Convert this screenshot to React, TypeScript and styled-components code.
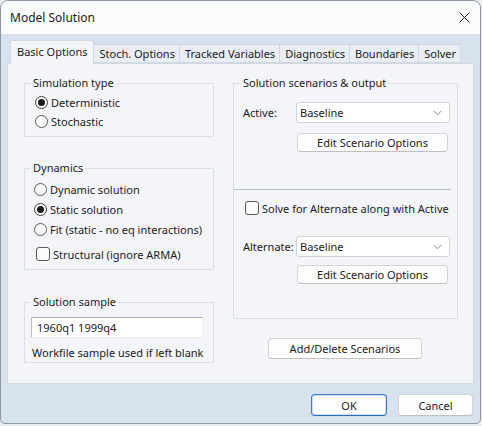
import React from 'react';
import styled, { createGlobalStyle } from 'styled-components';

const FONT = `"Noto Sans", "Segoe UI", sans-serif`;

const Global = createGlobalStyle`
  html, body { margin: 0; padding: 0; background: #e9ecf1; }
  body { font-family: ${FONT}; font-size: 11px; color: #1b1b1b; }
  * { box-sizing: border-box; }
`;

const Window = styled.div`
  width: 481px;
  height: 424px;
  border: 1px solid #8d97a5;
  border-radius: 8px 8px 5px 5px;
  background: #d8e1ee;
  display: flex;
  flex-direction: column;
  overflow: hidden;
`;

const TitleBar = styled.div`
  height: 33px;
  flex: none;
  background: #fafbfd;
  display: flex;
  align-items: center;
  justify-content: space-between;
  padding: 0 10px 0 9px;
  font-size: 12px;
`;

const CloseBtn = styled.div`
  width: 12px;
  height: 12px;
  display: flex;
  align-items: center;
  justify-content: center;
`;

const TabRow = styled.div`
  display: flex;
  align-items: flex-end;
  height: 23px;
  margin-top: 6px;
  padding-left: 9px;
  position: relative;
  z-index: 1;
`;

const Tab = styled.div<{ $active?: boolean }>`
  height: ${(p) => (p.$active ? 24 : 19)}px;
  margin-bottom: ${(p) => (p.$active ? -1 : 0)}px;
  padding: ${(p) => (p.$active ? '0 6px 2px 6px' : '0 4px 0 5px')};
  display: flex;
  align-items: center;
  background: ${(p) => (p.$active ? '#f3f5f9' : '#e9eef5')};
  border: 1px solid #d2d8e1;
  border-bottom: ${(p) => (p.$active ? 'none' : '1px solid #d2d8e1')};
  border-left: ${(p) => (p.$active ? '1px solid #d2d8e1' : 'none')};
  white-space: nowrap;
`;

const Panel = styled.div`
  margin: 0 6px;
  height: 321px;
  border: 1px solid #d2d8e1;
  background: #f3f5f9;
  padding: 11px 14px 0 16px;
  display: flex;
  gap: 19px;
`;

const Column = styled.div<{ $w: number }>`
  width: ${(p) => p.$w}px;
  display: flex;
  flex-direction: column;
`;

const Group = styled.fieldset<{ $mt?: number; $pl?: number; $h?: number }>`
  margin: ${(p) => p.$mt ?? 0}px 0 0 0;
  padding: 0 7px 0 ${(p) => p.$pl ?? 11}px;
  border: 1px solid #dcdfe5;
  min-width: 0;
  ${(p) => (p.$h ? `height: ${p.$h}px;` : '')}
  display: flex;
  flex-direction: column;
`;

const Legend = styled.legend<{ $ml?: number }>`
  padding: 0 2px;
  margin-left: ${(p) => p.$ml ?? -5}px;
  line-height: 16px;
  font-size: 11px;
`;

const OptionRow = styled.div<{ $h?: number; $mt?: number; $ml?: number }>`
  height: ${(p) => p.$h ?? 20}px;
  margin-top: ${(p) => p.$mt ?? 0}px;
  margin-left: ${(p) => p.$ml ?? 0}px;
  display: flex;
  align-items: center;
  gap: 3px;
  white-space: nowrap;
`;

const Radio = styled.span<{ $on?: boolean }>`
  width: 13px;
  height: 13px;
  flex: none;
  border-radius: 50%;
  border: 1px solid ${(p) => (p.$on ? '#3b3b3b' : '#5a5a5a')};
  background: #fbfbfb;
  display: flex;
  align-items: center;
  justify-content: center;
  &::after {
    content: '';
    width: 7px;
    height: 7px;
    border-radius: 50%;
    background: ${(p) => (p.$on ? '#1c1c1c' : 'transparent')};
  }
`;

const Check = styled.span`
  width: 14px;
  height: 14px;
  flex: none;
  border-radius: 3px;
  border: 1px solid #5a5a5a;
  background: #fbfbfb;
`;

const Spacer = styled.div<{ $h: number }>`
  height: ${(p) => p.$h}px;
  flex: none;
`;

const TextField = styled.div`
  margin-top: 7px;
  width: 172px;
  height: 21px;
  background: #fff;
  border: 1px solid #ececec;
  border-top: 1px solid #a9a9a9;
  border-left: 1px solid #bdbdbd;
  padding-left: 5px;
  display: flex;
  align-items: center;
`;

const Hint = styled.div`
  margin-top: 7px;
  margin-left: 1px;
  line-height: 16px;
  white-space: nowrap;
`;

const FieldRow = styled.div<{ $mt: number }>`
  margin-top: ${(p) => p.$mt}px;
  display: flex;
  align-items: center;
`;

const FieldLabel = styled.div`
  width: 53px;
  flex: none;
  white-space: nowrap;
`;

const Select = styled.div`
  flex: 1;
  height: 21px;
  background: #fff;
  border: 1px solid #d3d3d3;
  border-radius: 3px;
  display: flex;
  align-items: center;
  justify-content: space-between;
  padding: 0 7px 0 3px;
`;

const Button = styled.div<{ $w: number; $mt?: number; $ml?: number; $h?: number; $primary?: boolean }>`
  width: ${(p) => p.$w}px;
  height: ${(p) => p.$h ?? 19}px;
  margin-top: ${(p) => p.$mt ?? 0}px;
  margin-left: ${(p) => p.$ml ?? 0}px;
  flex: none;
  background: #fdfdfd;
  border: 1px solid ${(p) => (p.$primary ? '#3a7bd0' : '#d4d4d4')};
  border-bottom-color: ${(p) => (p.$primary ? '#2c6bc0' : '#bfbfbf')};
  box-shadow: ${(p) => (p.$primary ? 'inset 0 0 0 1px rgba(58,123,208,0.25)' : 'none')};
  border-radius: 4px;
  display: flex;
  align-items: center;
  justify-content: center;
  white-space: nowrap;
`;

const Separator = styled.div`
  margin: 37px -1px 0 -9px;
  height: 1px;
  background: #b9bfc8;
`;

const Footer = styled.div`
  display: flex;
  justify-content: flex-end;
  gap: 11px;
  padding: 10px 7px 0 0;
`;

const Chevron = () => (
  <svg width="9" height="6" viewBox="0 0 9 6">
    <path d="M0.5 0.8 L4.5 4.8 L8.5 0.8" fill="none" stroke="#8a8a8a" strokeWidth="1" />
  </svg>
);

const CloseIcon = () => (
  <svg width="11" height="11" viewBox="0 0 11 11">
    <path d="M0.5 0.5 L10.5 10.5 M10.5 0.5 L0.5 10.5" stroke="#222" strokeWidth="1" />
  </svg>
);

export default function App() {
  return (
    <>
      <Global />
      <Window>
        <TitleBar>
          <span>Model Solution</span>
          <CloseBtn>
            <CloseIcon />
          </CloseBtn>
        </TitleBar>
        <TabRow>
          <Tab $active>Basic Options</Tab>
          <Tab>Stoch. Options</Tab>
          <Tab>Tracked Variables</Tab>
          <Tab>Diagnostics</Tab>
          <Tab>Boundaries</Tab>
          <Tab>Solver</Tab>
        </TabRow>
        <Panel>
          <Column $w={190}>
            <Group>
              <Legend>Simulation type</Legend>
              <Spacer $h={2} />
              <OptionRow $ml={-1} $h={19}>
                <Radio $on />
                Deterministic
              </OptionRow>
              <OptionRow $ml={-1} $h={19}>
                <Radio />
                Stochastic
              </OptionRow>
              <Spacer $h={5} />
            </Group>
            <Group $mt={23}>
              <Legend>Dynamics</Legend>
              <Spacer $h={3} />
              <OptionRow $ml={-2}>
                <Radio />
                Dynamic solution
              </OptionRow>
              <OptionRow $ml={-2}>
                <Radio $on />
                Static solution
              </OptionRow>
              <OptionRow $ml={-2}>
                <Radio />
                Fit (static - no eq interactions)
              </OptionRow>
              <OptionRow $mt={5}>
                <Check />
                Structural (ignore ARMA)
              </OptionRow>
              <Spacer $h={5} />
            </Group>
            <Group $mt={24} $pl={6}>
              <Legend $ml={0}>Solution sample</Legend>
              <TextField>1960q1 1999q4</TextField>
              <Hint>Workfile sample used if left blank</Hint>
              <Spacer $h={1} />
            </Group>
          </Column>
          <Column $w={225}>
            <Group $pl={9} $h={244}>
              <Legend $ml={-2}>Solution scenarios &amp; output</Legend>
              <FieldRow $mt={11}>
                <FieldLabel>Active:</FieldLabel>
                <Select>
                  <span>Baseline</span>
                  <Chevron />
                </Select>
              </FieldRow>
              <Button $w={151} $mt={10} $ml={54}>
                Edit Scenario Options
              </Button>
              <Separator />
              <OptionRow $mt={8} $ml={2}>
                <Check />
                Solve for Alternate along with Active
              </OptionRow>
              <FieldRow $mt={18}>
                <FieldLabel>Alternate:</FieldLabel>
                <Select>
                  <span>Baseline</span>
                  <Chevron />
                </Select>
              </FieldRow>
              <Button $w={151} $mt={8} $ml={54}>
                Edit Scenario Options
              </Button>
            </Group>
            <Button $w={154} $h={21} $mt={19} $ml={35}>
              Add/Delete Scenarios
            </Button>
          </Column>
        </Panel>
        <Footer>
          <Button $w={76} $h={22} $primary>
            OK
          </Button>
          <Button $w={75} $h={22}>
            Cancel
          </Button>
        </Footer>
      </Window>
    </>
  );
}
